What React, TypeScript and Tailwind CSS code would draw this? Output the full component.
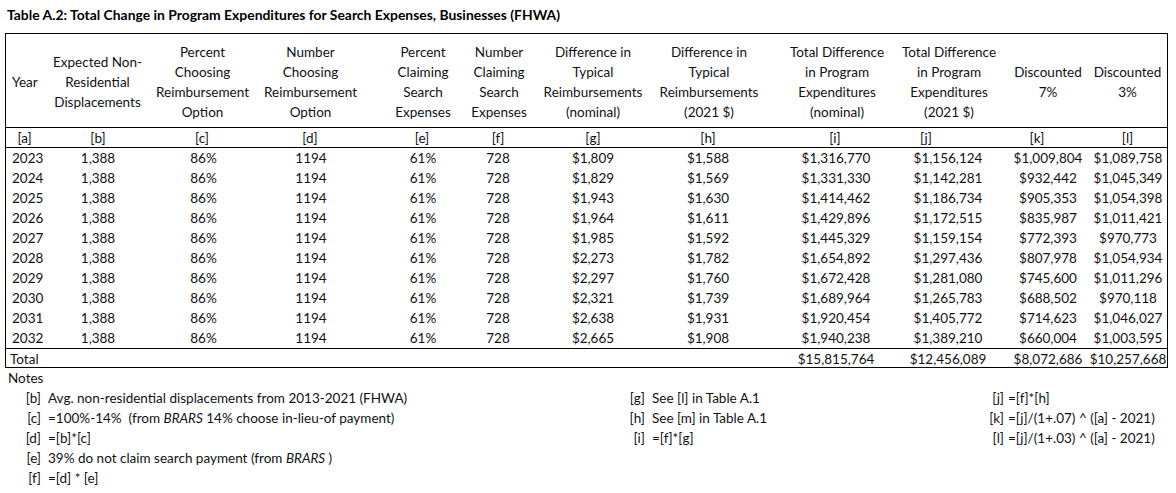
import React from "react";

const COLS = "grid grid-cols-[44px_100px_107px_110px_93px_85px_105px_122px_120px_106px_90px_79px]";

const headerPad = ["", "pr-[5px]", "pr-[2px]", "pr-[3px]", "pl-[19px]", "pr-[7px]", "pr-[9px]", "pr-[4px]", "pl-[10px]", "pl-[8px]", "pl-[10px]", ""];
const labelPad = ["pr-[7px]", "pr-[4px]", "pr-[3px]", "pr-[4px]", "pl-[17px]", "pr-[9px]", "pr-[9px]", "pr-[6px]", "pl-[6px]", "pr-[38px]", "pr-[12px]", ""];
const dataPad = ["", "pr-[4px]", "", "pr-[2px]", "pl-[19px]", "pr-[9px]", "pr-[9px]", "pr-[6px]", "pl-[8px]", "pl-[6px]", "pl-[10px]", "pl-[1px]"];

const headers: string[][] = [
  ["Year"],
  ["Expected Non-", "Residential", "Displacements"],
  ["Percent", "Choosing", "Reimbursement", "Option"],
  ["Number", "Choosing", "Reimbursement", "Option"],
  ["Percent", "Claiming", "Search", "Expenses"],
  ["Number", "Claiming", "Search", "Expenses"],
  ["Difference in", "Typical", "Reimbursements", "(nominal)"],
  ["Difference in", "Typical", "Reimbursements", "(2021 $)"],
  ["Total Difference", "in Program", "Expenditures", "(nominal)"],
  ["Total Difference", "in Program", "Expenditures", "(2021 $)"],
  ["Discounted", "7%"],
  ["Discounted", "3%"],
];

const labels = ["[a]", "[b]", "[c]", "[d]", "[e]", "[f]", "[g]", "[h]", "[i]", "[j]", "[k]", "[l]"];

const rows: string[][] = [
  ["2023", "$1,809", "$1,588", "$1,316,770", "$1,156,124", "$1,009,804", "$1,089,758"],
  ["2024", "$1,829", "$1,569", "$1,331,330", "$1,142,281", "$932,442", "$1,045,349"],
  ["2025", "$1,943", "$1,630", "$1,414,462", "$1,186,734", "$905,353", "$1,054,398"],
  ["2026", "$1,964", "$1,611", "$1,429,896", "$1,172,515", "$835,987", "$1,011,421"],
  ["2027", "$1,985", "$1,592", "$1,445,329", "$1,159,154", "$772,393", "$970,773"],
  ["2028", "$2,273", "$1,782", "$1,654,892", "$1,297,436", "$807,978", "$1,054,934"],
  ["2029", "$2,297", "$1,760", "$1,672,428", "$1,281,080", "$745,600", "$1,011,296"],
  ["2030", "$2,321", "$1,739", "$1,689,964", "$1,265,783", "$688,502", "$970,118"],
  ["2031", "$2,638", "$1,931", "$1,920,454", "$1,405,772", "$714,623", "$1,046,027"],
  ["2032", "$2,665", "$1,908", "$1,940,238", "$1,389,210", "$660,004", "$1,003,595"],
];

function Cell({ pad, children, left }: { pad: string; children: React.ReactNode; left?: boolean }) {
  return (
    <div className={`flex items-center whitespace-nowrap ${left ? "justify-start" : "justify-center"} ${pad}`}>
      {children}
    </div>
  );
}

export default function App() {
  return (
    <div
      className="w-[1176px] h-[493px] bg-white text-[#111] text-[13.5px] leading-[20px] overflow-hidden"
      style={{ fontFamily: "Lato, 'Open Sans', sans-serif" }}
    >
      <div className="h-[33px] pt-[5px] pl-[7px] font-bold text-[13.9px] text-black">
        Table A.2: Total Change in Program Expenditures for Search Expenses, Businesses (FHWA)
      </div>

      <div className="ml-[5px] w-[1163px] border border-black">
        {/* Header */}
        <div className={`${COLS} h-[94px] border-b border-black`}>
          {headers.map((lines, i) => (
            <div
              key={i}
              className={`flex flex-col items-center justify-center whitespace-nowrap pt-[3px] ${i === 0 ? "items-start pl-[6px]" : ""} ${headerPad[i]}`}
            >
              {lines.map((l, j) => (
                <div key={j}>{l}</div>
              ))}
            </div>
          ))}
        </div>

        {/* Labels */}
        <div className={`${COLS} h-[20px] border-b border-black`}>
          {labels.map((l, i) => (
            <Cell key={i} pad={labelPad[i]}>
              {l}
            </Cell>
          ))}
        </div>

        {/* Data */}
        <div className="border-b border-black">
          {rows.map((r, ri) => {
            const vals = [r[0], "1,388", "86%", "1194", "61%", "728", r[1], r[2], r[3], r[4], r[5], r[6]];
            return (
              <div key={ri} className={`${COLS} h-[20px]`}>
                {vals.map((v, i) => (
                  <Cell key={i} pad={i === 0 ? "pl-[6px]" : dataPad[i]} left={i === 0}>
                    {v}
                  </Cell>
                ))}
              </div>
            );
          })}
        </div>

        {/* Total */}
        <div className={`${COLS} h-[18px]`}>
          <Cell pad="pl-[4px]" left>
            Total
          </Cell>
          {["", "", "", "", "", "", "", "$15,815,764", "$12,456,089", "$8,072,686", "$10,257,668"].map((v, i) => (
            <Cell key={i} pad={dataPad[i + 1]}>
              {v}
            </Cell>
          ))}
        </div>
      </div>

      {/* Notes */}
      <div className="pl-[8px] h-[20px]">Notes</div>
      <div className="flex">
        <div className="w-[600px] grid grid-cols-[41px_1fr] gap-x-[7px]">
          <div className="text-right">[b]</div>
          <div>Avg. non-residential displacements from 2013-2021 (FHWA)</div>
          <div className="text-right">[c]</div>
          <div className="whitespace-pre">
            =100%-14%  (from <i>BRARS</i> 14% choose in-lieu-of payment)
          </div>
          <div className="text-right">[d]</div>
          <div>=[b]*[c]</div>
          <div className="text-right">[e]</div>
          <div>
            39% do not claim search payment (from <i>BRARS</i> )
          </div>
          <div className="text-right">[f]</div>
          <div>=[d] * [e]</div>
        </div>
        <div className="w-[340px] self-start grid grid-cols-[45px_1fr] gap-x-[7px]">
          <div className="text-right">[g]</div>
          <div>See [l] in Table A.1</div>
          <div className="text-right">[h]</div>
          <div>See [m] in Table A.1</div>
          <div className="text-right">[i]</div>
          <div>=[f]*[g]</div>
        </div>
        <div className="flex-1 self-start grid grid-cols-[64px_1fr] gap-x-[4px]">
          <div className="text-right">[j]</div>
          <div>=[f]*[h]</div>
          <div className="text-right">[k]</div>
          <div>=[j]/(1+.07) ^ ([a] - 2021)</div>
          <div className="text-right">[l]</div>
          <div>=[j]/(1+.03) ^ ([a] - 2021)</div>
        </div>
      </div>
    </div>
  );
}
